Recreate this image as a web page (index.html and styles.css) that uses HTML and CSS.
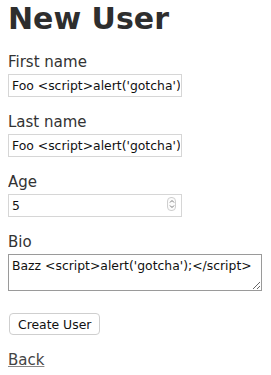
FILE: index.html
```html
<!DOCTYPE html>
<html lang="en">
<head>
    <meta charset="UTF-8">
    <meta name="viewport" content="width=device-width, initial-scale=1.0">
    <title>New User</title>
    <link rel="stylesheet" href="styles.css">
</head>
<body>
    <h1>New User</h1>

    <form class="user-form">
        <div class="field">
            <label for="first-name">First name</label>
            <input type="text" id="first-name" value="Foo <script>alert('gotcha')</script>">
        </div>

        <div class="field">
            <label for="last-name">Last name</label>
            <input type="text" id="last-name" value="Foo <script>alert('gotcha')</script>">
        </div>

        <div class="field">
            <label for="age">Age</label>
            <div class="number-wrap">
                <input type="number" id="age" value="5">
                <span class="spinner">
                    <svg width="6" height="10" viewBox="0 0 6 10">
                        <path d="M1 3.5 L3 1.5 L5 3.5" fill="none" stroke="#777" stroke-width="1"/>
                        <path d="M1 6.5 L3 8.5 L5 6.5" fill="none" stroke="#777" stroke-width="1"/>
                    </svg>
                </span>
            </div>
        </div>

        <div class="field">
            <label for="bio">Bio</label>
            <textarea id="bio">Bazz <script>alert('gotcha');</script></textarea>
        </div>

        <div class="actions">
            <button type="button">Create User</button>
        </div>
    </form>

    <a class="back-link" href="#">Back</a>
</body>
</html>
```

FILE: styles.css
```css
body {
    margin: 0 8px;
    font-family: "DejaVu Sans", Verdana, sans-serif;
    font-size: 15px;
    color: #333;
    background: #fff;
}

h1 {
    margin: 1px 0 16px;
    font-size: 30px;
    line-height: 36px;
    font-weight: bold;
    color: #2e2e2e;
}

.user-form {
    margin: 0;
}

.field {
    margin-bottom: 16px;
}

.field label {
    display: block;
    line-height: 18px;
    margin-bottom: 3px;
}

.field input,
.field textarea {
    display: block;
    box-sizing: border-box;
    margin: 0;
    font-family: "DejaVu Sans", Verdana, sans-serif;
    font-size: 12.4px;
    color: #111;
    background: #fff;
    outline: none;
}

.field input {
    width: 174px;
    height: 23px;
    padding: 0 1px 0 3px;
    border: 1px solid #d6d6d6;
}

.number-wrap {
    position: relative;
    width: 174px;
}

.number-wrap input {
    -moz-appearance: textfield;
    appearance: textfield;
}

.number-wrap input::-webkit-inner-spin-button,
.number-wrap input::-webkit-outer-spin-button {
    -webkit-appearance: none;
    margin: 0;
}

.spinner {
    position: absolute;
    top: 3px;
    left: 159px;
    width: 9px;
    height: 14px;
    box-sizing: border-box;
    border: 1px solid #cfcfcf;
    border-radius: 4px;
    display: flex;
    align-items: center;
    justify-content: center;
    background: #fbfbfb;
}

.field textarea {
    width: 254px;
    height: 37px;
    padding: 4px 3px;
    border: 1px solid #9a9a9a;
    line-height: 14px;
    resize: both;
}

.actions {
    padding-top: 6px;
    margin-bottom: 16px;
}

.actions button {
    margin: 0 0 0 1px;
    height: 22px;
    padding: 0 8px;
    font-family: "DejaVu Sans", Verdana, sans-serif;
    font-size: 12.4px;
    color: #111;
    background: #fff;
    border: 1px solid #cfcfcf;
    border-radius: 4px;
}

.back-link {
    display: block;
    width: max-content;
    line-height: 18px;
    color: #444;
    text-decoration: underline;
    text-decoration-color: #888;
}
```
